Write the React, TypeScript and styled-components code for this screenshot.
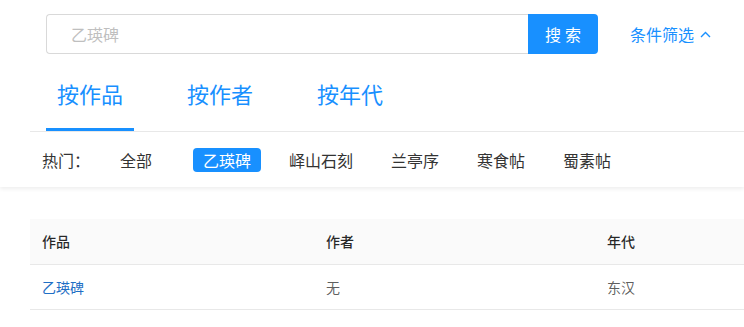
import React from 'react';
import styled, { createGlobalStyle } from 'styled-components';

const GlobalStyle = createGlobalStyle`
  html, body {
    margin: 0;
    padding: 0;
    background: #fff;
  }
  body {
    font-family: "Noto Sans CJK SC", "Noto Sans", sans-serif;
    color: rgba(0, 0, 0, 0.85);
  }
  * {
    box-sizing: border-box;
  }
`;

const blue = '#1890ff';

const Page = styled.div`
  width: 744px;
  height: 327px;
  overflow: hidden;
`;

const FilterCard = styled.section`
  background: #fff;
  box-shadow: 0 2px 4px rgba(0, 0, 0, 0.07);
`;

const SearchRow = styled.div`
  display: flex;
  align-items: center;
  padding: 14px 0 0 46px;
`;

const SearchInput = styled.input`
  width: 482px;
  height: 40px;
  border: 1px solid #d9d9d9;
  border-right: none;
  border-radius: 4px 0 0 4px;
  padding: 0 0 0 24px;
  font-family: inherit;
  font-size: 16px;
  color: rgba(0, 0, 0, 0.85);
  outline: none;

  &::placeholder {
    color: #bfbfbf;
  }
`;

const SearchButton = styled.button`
  width: 70px;
  height: 40px;
  border: none;
  border-radius: 0 4px 4px 0;
  background: ${blue};
  color: #fff;
  font-family: inherit;
  font-size: 16px;
  letter-spacing: 4px;
  padding: 0 0 0 4px;
  cursor: pointer;
`;

const FilterToggle = styled.button`
  display: flex;
  align-items: center;
  gap: 6px;
  margin-left: 32px;
  border: none;
  background: none;
  padding: 0;
  color: ${blue};
  font-family: inherit;
  font-size: 16px;
  cursor: pointer;
`;

const Inner = styled.div`
  margin-left: 30px;
`;

const TabsBar = styled.nav`
  display: flex;
  gap: 42px;
  padding-left: 16px;
  border-bottom: 1px solid #e8e8e8;
`;

const Tab = styled.div<{ $active?: boolean }>`
  width: 88px;
  padding: 24px 0 20px;
  text-align: center;
  font-size: 22px;
  line-height: 30px;
  color: ${blue};
  border-bottom: 3px solid ${({ $active }) => ($active ? blue : 'transparent')};
  cursor: pointer;
`;

const HotRow = styled.div`
  display: flex;
  align-items: center;
  height: 55px;
  padding-left: 12px;
  font-size: 16px;
  color: #333;
`;

const HotLabel = styled.span`
  margin-right: 20px;
`;

const HotItem = styled.span<{ $active?: boolean; $wide?: boolean }>`
  height: 24px;
  line-height: 24px;
  padding: 0 10px;
  margin-right: ${({ $wide }) => ($wide ? '31px' : '18px')};
  border-radius: 4px;
  background: ${({ $active }) => ($active ? blue : 'transparent')};
  color: ${({ $active }) => ($active ? '#fff' : '#333')};
  cursor: pointer;
`;

const TableWrap = styled.div`
  margin: 32px 0 0 30px;
`;

const Table = styled.table`
  width: 846px;
  border-collapse: collapse;
  table-layout: fixed;
  font-size: 14px;
`;

const HeadCell = styled.th<{ $w?: number }>`
  width: ${({ $w }) => ($w ? `${$w}px` : 'auto')};
  height: 45px;
  padding: 0 12px;
  text-align: left;
  font-weight: 500;
  color: rgba(0, 0, 0, 0.85);
  background: #fafafa;
  border-bottom: 1px solid #e8e8e8;
`;

const Cell = styled.td`
  height: 45px;
  padding: 0 12px;
  color: rgba(0, 0, 0, 0.65);
  border-bottom: 1px solid #e8e8e8;
`;

const WorkLink = styled.a`
  color: #1f6fc5;
  text-decoration: none;
`;

const ChevronUp = () => (
  <svg width="11" height="7" viewBox="0 0 11 7" fill="none">
    <polyline points="1,6 5.5,1.5 10,6" stroke={blue} strokeWidth="1.4" />
  </svg>
);

const hotWords = ['峄山石刻', '兰亭序', '寒食帖', '蜀素帖'];

const App: React.FC = () => {
  return (
    <Page>
      <GlobalStyle />
      <FilterCard>
        <SearchRow>
          <SearchInput placeholder="乙瑛碑" />
          <SearchButton>搜索</SearchButton>
          <FilterToggle>
            条件筛选
            <ChevronUp />
          </FilterToggle>
        </SearchRow>
        <Inner>
          <TabsBar>
            <Tab $active>按作品</Tab>
            <Tab>按作者</Tab>
            <Tab>按年代</Tab>
          </TabsBar>
          <HotRow>
            <HotLabel>热门：</HotLabel>
            <HotItem $wide>全部</HotItem>
            <HotItem $active>乙瑛碑</HotItem>
            {hotWords.map((w) => (
              <HotItem key={w}>{w}</HotItem>
            ))}
          </HotRow>
        </Inner>
      </FilterCard>
      <TableWrap>
        <Table>
          <thead>
            <tr>
              <HeadCell $w={284}>作品</HeadCell>
              <HeadCell $w={281}>作者</HeadCell>
              <HeadCell>年代</HeadCell>
            </tr>
          </thead>
          <tbody>
            <tr>
              <Cell>
                <WorkLink href="#">乙瑛碑</WorkLink>
              </Cell>
              <Cell>无</Cell>
              <Cell>东汉</Cell>
            </tr>
          </tbody>
        </Table>
      </TableWrap>
    </Page>
  );
};

export default App;
